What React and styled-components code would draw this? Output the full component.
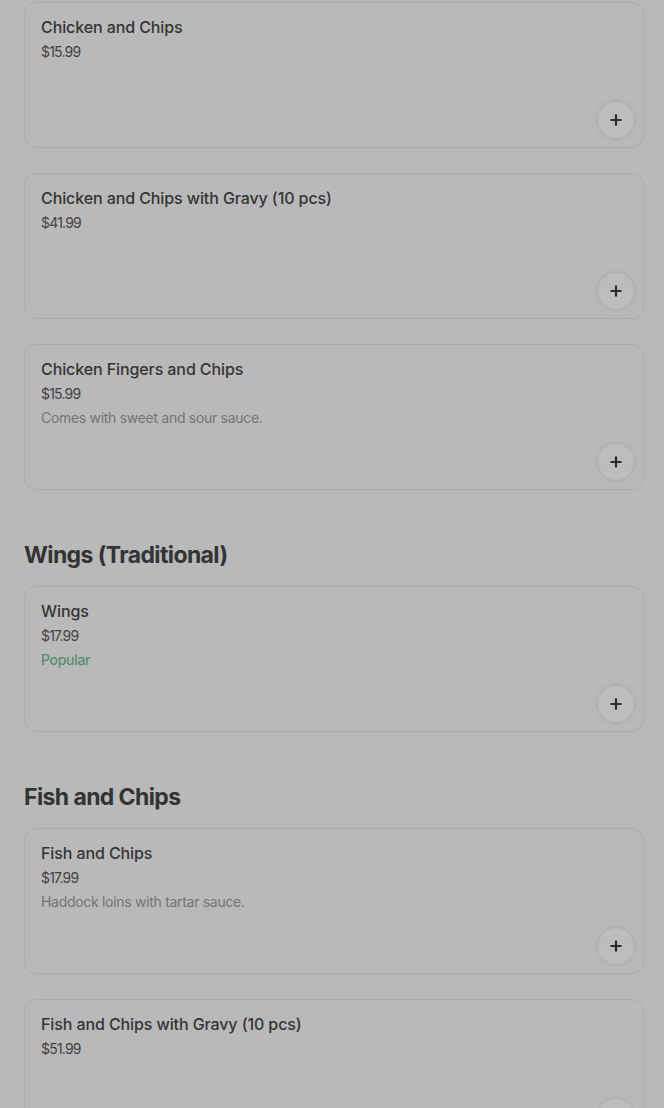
import React from 'react'
import styled, { createGlobalStyle } from 'styled-components'

const GlobalStyle = createGlobalStyle`
  html, body {
    margin: 0;
    padding: 0;
    background: #b9b9b9;
  }
  body {
    font-family: Inter, "Noto Sans", "Liberation Sans", sans-serif;
    color: #333;
    -webkit-font-smoothing: antialiased;
  }
`

const Page = styled.div`
  padding: 2px 20px 0 24px;
  display: flex;
  flex-direction: column;
`

const Section = styled.section`
  display: flex;
  flex-direction: column;
  gap: 25px;
  margin-top: ${(p) => (p.$first ? '0' : '48px')};
`

const SectionTitle = styled.h2`
  margin: 0 0 -8px;
  padding-top: 3px;
  font-size: 23px;
  line-height: 28px;
  font-weight: 700;
  letter-spacing: -0.6px;
  color: #333;
`

const Card = styled.div`
  box-sizing: border-box;
  height: 146px;
  border: 1px solid #adadad;
  border-radius: 12px;
  background: #b9b9b9;
  padding: 12px 9px 9px 16px;
  display: flex;
  flex-direction: column;
`

const Name = styled.div`
  font-size: 16px;
  line-height: 24px;
  font-weight: 500;
  color: #343434;
  letter-spacing: -0.1px;
`

const Line = styled.div`
  margin-top: 2px;
  font-size: 14px;
  line-height: 22px;
  letter-spacing: ${(p) => p.$spacing || '-0.3px'};
  color: ${(p) => p.$color || '#424242'};
  font-weight: ${(p) => p.$weight || 400};
`

const AddButton = styled.button`
  margin-top: auto;
  align-self: flex-end;
  width: 36px;
  height: 36px;
  border-radius: 50%;
  border: none;
  padding: 0;
  background: #bdbdbd;
  box-shadow: 0 0 4px rgba(0, 0, 0, 0.12);
  display: flex;
  align-items: center;
  justify-content: center;
  color: #2b2b2b;
`

const PlusIcon = () => (
  <svg width="14" height="14" viewBox="0 0 14 14" fill="none">
    <path d="M7 1.5v11M1.5 7h11" stroke="currentColor" strokeWidth="2.2" />
  </svg>
)

const sections = [
  {
    items: [
      { name: 'Chicken and Chips', price: '$15.99' },
      { name: 'Chicken and Chips with Gravy (10 pcs)', price: '$41.99' },
      { name: 'Chicken Fingers and Chips', price: '$15.99', desc: 'Comes with sweet and sour sauce.' },
    ],
  },
  {
    title: 'Wings (Traditional)',
    items: [{ name: 'Wings', price: '$17.99', popular: true }],
  },
  {
    title: 'Fish and Chips',
    items: [
      { name: 'Fish and Chips', price: '$17.99', desc: 'Haddock loins with tartar sauce.' },
      { name: 'Fish and Chips with Gravy (10 pcs)', price: '$51.99' },
    ],
  },
]

const MenuItem = ({ item }) => (
  <Card>
    <Name>{item.name}</Name>
    <Line $spacing="-0.8px">{item.price}</Line>
    {item.desc && <Line $color="#747474">{item.desc}</Line>}
    {item.popular && (
      <Line $color="#578a70" $weight={500}>
        Popular
      </Line>
    )}
    <AddButton aria-label="Add">
      <PlusIcon />
    </AddButton>
  </Card>
)

export default function App() {
  return (
    <>
      <GlobalStyle />
      <Page>
        {sections.map((section, i) => (
          <Section key={i} $first={i === 0}>
            {section.title && <SectionTitle>{section.title}</SectionTitle>}
            {section.items.map((item) => (
              <MenuItem key={item.name} item={item} />
            ))}
          </Section>
        ))}
      </Page>
    </>
  )
}
